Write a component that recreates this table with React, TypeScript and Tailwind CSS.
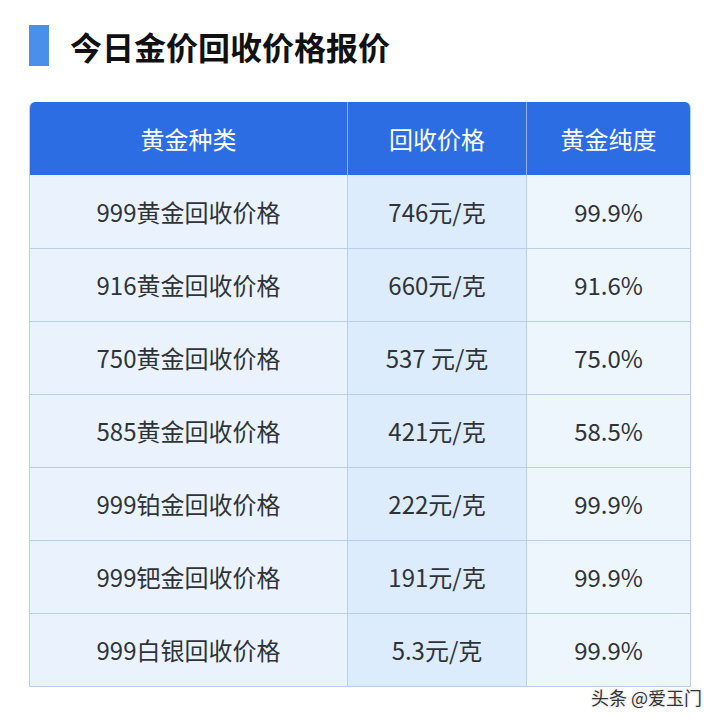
import React from "react";

const rows = [
  ["999黄金回收价格", "746元/克", "99.9%"],
  ["916黄金回收价格", "660元/克", "91.6%"],
  ["750黄金回收价格", "537 元/克", "75.0%"],
  ["585黄金回收价格", "421元/克", "58.5%"],
  ["999铂金回收价格", "222元/克", "99.9%"],
  ["999钯金回收价格", "191元/克", "99.9%"],
  ["999白银回收价格", "5.3元/克", "99.9%"],
];

export default function App() {
  return (
    <div
      className="w-[720px] h-[720px] bg-white relative overflow-hidden"
      style={{ fontFamily: '"Noto Sans CJK SC", "Noto Sans", sans-serif' }}
    >
      <div className="flex items-center pl-[29px] pt-[25px] h-[66px]">
        <div className="w-[20px] h-[41px] bg-[#4a8fea]" />
        <div className="ml-[21px] text-[32px] leading-none font-bold text-[#111]">今日金价回收价格报价</div>
      </div>
      <div className="ml-[29px] mt-[36px] w-[662px] rounded-t-[6px] overflow-hidden border-l border-r border-b border-[#b7cfe9]">
        <div className="grid grid-cols-[318px_179px_1fr] h-[73px] bg-[#2d6de4] text-white text-[24px]">
          <div className="flex items-center justify-center border-r border-[#8fb3ef]">黄金种类</div>
          <div className="flex items-center justify-center border-r border-[#8fb3ef]">回收价格</div>
          <div className="flex items-center justify-center">黄金纯度</div>
        </div>
        {rows.map((r, i) => (
          <div
            key={i}
            className={`grid grid-cols-[318px_179px_1fr] h-[73px] text-[24px] text-[#2f3338] ${i > 0 ? "border-t border-[#b7cfe9]" : ""}`}
          >
            <div className="flex items-center justify-center bg-[#eaf3fd] border-r border-[#b7cfe9]">{r[0]}</div>
            <div className="flex items-center justify-center bg-[#dcecfc] border-r border-[#b7cfe9]">{r[1]}</div>
            <div className="flex items-center justify-center bg-[#edf5fd]">{r[2]}</div>
          </div>
        ))}
      </div>
      <div className="absolute right-[18px] top-[688px] text-[18px] text-[#333] leading-none" style={{ textShadow: "0 0 2px #fff, 0 0 3px rgba(0,0,0,0.25)" }}>
        头条 @爱玉门
      </div>
    </div>
  );
}
